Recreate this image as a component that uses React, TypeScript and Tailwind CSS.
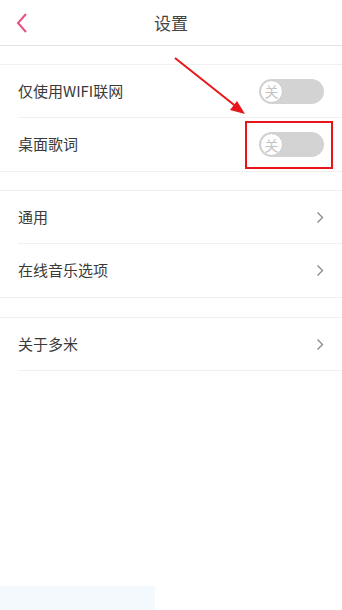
import React from "react"

const font = { fontFamily: '"Noto Sans CJK SC", "Noto Sans", sans-serif' }

function Toggle() {
  return (
    <div className="relative w-[65px] h-[25px] rounded-full bg-[#d3d3d3]">
      <div className="absolute left-[1px] top-[1px] w-[23px] h-[23px] rounded-full bg-white border border-[#c8c8c8] flex items-center justify-center text-[14px] leading-none text-[#c4c4c4]">
        关
      </div>
    </div>
  )
}

function Chevron() {
  return (
    <svg width="8" height="13" viewBox="0 0 8 13" fill="none">
      <path d="M1.5 1.5 L6.5 6.5 L1.5 11.5" stroke="#888" strokeWidth="1.3" />
    </svg>
  )
}

function Row({ label, right, last }: { label: string; right: React.ReactNode; last?: boolean }) {
  return (
    <div className="pl-[18px]">
      <div className={`h-[53px] flex items-center justify-between pr-[18px] ${last ? "" : "border-b border-[#f0f0f0]"}`}>
        <span className="text-[15px] text-[#3a3a3a]">{label}</span>
        {right}
      </div>
    </div>
  )
}

export default function App() {
  return (
    <div className="relative w-[342px] h-[610px] bg-white overflow-hidden" style={font}>
      {/* Header */}
      <div className="relative h-[46px] flex items-center justify-center border-b border-[#e4e4e4]">
        <svg className="absolute left-[15px] top-[12px]" width="14" height="22" viewBox="0 0 14 22" fill="none">
          <path d="M11 2 L3 11 L11 20" stroke="#e8507e" strokeWidth="2" />
        </svg>
        <span className="text-[17px] text-[#444]">设置</span>
      </div>

      <div className="h-[18px]" />
      <div className="border-y border-[#f0f0f0]">
        <Row label="仅使用WIFI联网" right={<Toggle />} />
        <Row label="桌面歌词" right={<Toggle />} last />
      </div>

      <div className="h-[18px]" />
      <div className="border-y border-[#f0f0f0]">
        <Row label="通用" right={<Chevron />} />
        <Row label="在线音乐选项" right={<Chevron />} last />
      </div>

      <div className="h-[19px]" />
      <div className="border-t border-[#f0f0f0]">
        <Row label="关于多米" right={<Chevron />} />
      </div>

      {/* annotation: red box */}
      <div className="absolute left-[245px] top-[121px] w-[88px] h-[48px] border-[2.5px] border-[#e8161b]" />
      {/* annotation: arrow */}
      <svg className="absolute left-0 top-0" width="342" height="200" viewBox="0 0 342 200">
        <line x1="175" y1="58" x2="238" y2="108" stroke="#e8161b" strokeWidth="2" />
        <path d="M245 114 L230 110 L237 101 Z" fill="#e8161b" />
      </svg>

      <div className="absolute left-0 bottom-0 w-[155px] h-[24px] bg-[#f4f9fd]" />
    </div>
  )
}
